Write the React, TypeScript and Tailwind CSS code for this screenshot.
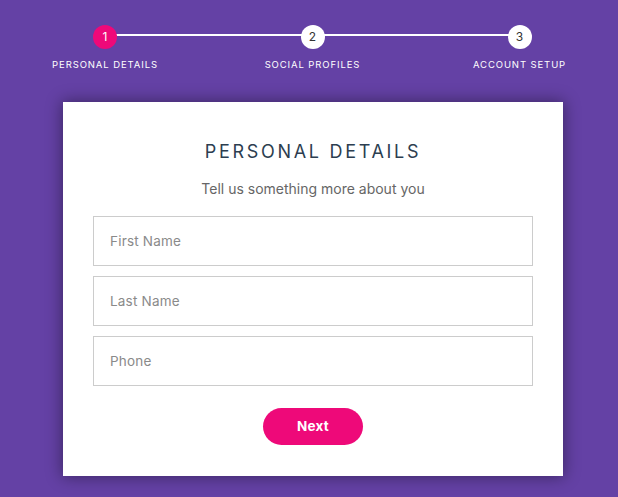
import React from "react";

const steps = ["Personal Details", "Social Profiles", "Account Setup"];

export default function App() {
  return (
    <div
      className="h-[497px] w-full overflow-hidden bg-[#6441a5]"
      style={{ fontFamily: "Inter, 'Noto Sans', sans-serif" }}
    >
      <div className="relative w-[618px] pl-[1px] pt-[25px]">
        <div className="absolute left-[105px] top-[34px] h-[2px] w-[415px] bg-white" />
        <div className="relative grid grid-cols-[208px_207px_207px]">
          {steps.map((s, i) => (
            <div key={s} className="flex flex-col items-center">
              <div
                className={
                  i === 0
                    ? "flex h-[24px] w-[24px] items-center justify-center rounded-full bg-[#ee0979] text-[12px] text-white"
                    : "flex h-[24px] w-[24px] items-center justify-center rounded-full bg-white text-[12px] text-[#333]"
                }
              >
                {i + 1}
              </div>
              <div className="mt-[10px] whitespace-nowrap text-[9.5px] leading-[12px] tracking-[0.9px] text-white uppercase">
                {s}
              </div>
            </div>
          ))}
        </div>
      </div>
      <div className="ml-[63px] mt-[31px] w-[500px] bg-white px-[30px] pt-[38px] pb-[31px] shadow-[0_0_15px_1px_rgba(0,0,0,0.4)]">
        <h2 className="text-center text-[18px] leading-[24px] tracking-[2.7px] text-[#2c3e50] uppercase">
          Personal Details
        </h2>
        <p className="mt-[15px] text-center text-[14px] leading-[20px] text-[#666]">
          Tell us something more about you
        </p>
        <div className="mt-[17px] flex flex-col gap-[10px]">
          {["First Name", "Last Name", "Phone"].map((p) => (
            <input
              key={p}
              placeholder={p}
              className="h-[50px] w-full border border-[#ccc] px-[16px] text-[13.5px] tracking-[0.2px] text-[#2c3e50] outline-none placeholder:text-[#8a8a8a]"
            />
          ))}
        </div>
        <div className="mt-[22px] flex justify-center">
          <button className="h-[37px] w-[100px] rounded-full bg-[#ee0979] text-[13.5px] font-bold tracking-[0.3px] text-white">
            Next
          </button>
        </div>
      </div>
    </div>
  );
}
